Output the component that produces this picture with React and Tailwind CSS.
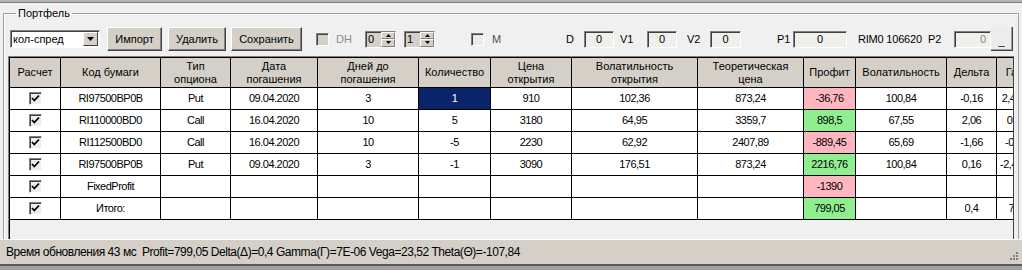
import React from 'react';

const colW = [
  'w-[51px]', 'w-[100px]', 'w-[70px]', 'w-[87px]', 'w-[101px]', 'w-[72px]', 'w-[81px]',
  'w-[126px]', 'w-[106px]', 'w-[52px]', 'w-[91px]', 'w-[50px]', 'w-[51px]',
];

const headers = [
  ['Расчет'], ['Код бумаги'], ['Тип', 'опциона'], ['Дата', 'погашения'], ['Дней до', 'погашения'],
  ['Количество'], ['Цена', 'открытия'], ['Волатильность', 'открытия'], ['Теоретическая', 'цена'],
  ['Профит'], ['Волатильность'], ['Дельта'], ['Гамма'],
];

const rows = [
  { v: ['RI97500BP0B', 'Put', '09.04.2020', '3', '1', '910', '102,36', '873,24', '-36,76', '100,84', '-0,16', '2,47E-05'], profit: 'red', sel: true },
  { v: ['RI110000BD0', 'Call', '16.04.2020', '10', '5', '3180', '64,95', '3359,7', '898,5', '67,55', '2,06', '0,0001'], profit: 'green' },
  { v: ['RI112500BD0', 'Call', '16.04.2020', '10', '-5', '2230', '62,92', '2407,89', '-889,45', '65,69', '-1,66', '-0,0001'], profit: 'red' },
  { v: ['RI97500BP0B', 'Put', '09.04.2020', '3', '-1', '3090', '176,51', '873,24', '2216,76', '100,84', '0,16', '-2,47E-05'], profit: 'green' },
  { v: ['FixedProfit', '', '', '', '', '', '', '', '-1390', '', '', ''], profit: 'red' },
  { v: ['Итого:', '', '', '', '', '', '', '', '799,05', '', '0,4', '7E-06'], profit: 'green' },
];

function CheckMark() {
  return (
    <svg width="9" height="9" viewBox="0 0 9 9">
      <path d="M1 4 L3.3 6.5 L8 1.5" fill="none" stroke="#000" strokeWidth="1.8" />
    </svg>
  );
}

function CheckBox({ checked, disabled }) {
  return (
    <div className={`w-[13px] h-[13px] shrink-0 border border-t-[#808080] border-l-[#808080] border-b-white border-r-white shadow-[inset_1px_1px_0_#404040] flex items-center justify-center ${disabled ? 'bg-[#d4d0c8]' : 'bg-[#ececec]'}`}>
      {checked && <CheckMark />}
    </div>
  );
}

function Btn({ className, children }) {
  return (
    <div className={`h-[24px] shrink-0 bg-[#d4d0c8] border border-t-white border-l-white border-b-[#404040] border-r-[#404040] shadow-[inset_-1px_-1px_0_#808080] flex items-center justify-center text-[11px] ${className}`}>
      {children}
    </div>
  );
}

function Edit({ className, children, gray }) {
  return (
    <div className={`h-[17px] shrink-0 bg-[#f0efec] border border-t-[#808080] border-l-[#808080] border-b-white border-r-white shadow-[inset_1px_1px_0_#404040] flex items-center text-[11px] ${gray ? 'text-[#8a8a8a] justify-end pr-[4px]' : 'justify-center'} ${className}`}>
      {children}
    </div>
  );
}

function Tri({ up }) {
  return (
    <svg width="5" height="3" viewBox="0 0 5 3">
      <path d={up ? 'M2.5 0 L5 3 L0 3 Z' : 'M0 0 L5 0 L2.5 3 Z'} fill="#000" />
    </svg>
  );
}

function Spin({ value, className }) {
  return (
    <div className={`h-[17px] w-[31px] shrink-0 bg-[#d4d0c8] border border-t-[#808080] border-l-[#808080] border-b-white border-r-white shadow-[inset_1px_1px_0_#404040] flex text-[11px] ${className}`}>
      <div className="flex-1 pl-[2px] flex items-center">{value}</div>
      <div className="w-[14px] flex flex-col">
        <div className="flex-1 bg-[#d4d0c8] border-t border-l border-t-white border-l-white border-b border-r border-b-[#808080] border-r-[#808080] flex items-center justify-center"><Tri up /></div>
        <div className="flex-1 bg-[#d4d0c8] border-t border-l border-t-white border-l-white border-b border-r border-b-[#808080] border-r-[#808080] flex items-center justify-center"><Tri /></div>
      </div>
    </div>
  );
}

function Toolbar() {
  return (
    <div className="flex items-center h-[24px] ml-[2px] mt-[7px]">
      <div className="w-[90px] h-[18px] shrink-0 bg-white border border-t-[#808080] border-l-[#808080] border-b-white border-r-white shadow-[inset_1px_1px_0_#404040] flex items-center">
        <div className="flex-1 pl-[2px] text-[11px]">кол-спред</div>
        <div className="w-[15px] h-[14px] mr-[1px] bg-[#d4d0c8] border border-t-white border-l-white border-b-[#404040] border-r-[#404040] flex items-center justify-center">
          <svg width="7" height="4" viewBox="0 0 7 4"><path d="M0 0 L7 0 L3.5 4 Z" fill="#000" /></svg>
        </div>
      </div>
      <Btn className="w-[55px] ml-[7px]">Импорт</Btn>
      <Btn className="w-[58px] ml-[6px]">Удалить</Btn>
      <Btn className="w-[71px] ml-[5px]">Сохранить</Btn>
      <div className="ml-[14px]"><CheckBox disabled /></div>
      <span className="w-[29px] ml-[7px] text-[11px] text-[#8c8c8c]">DH</span>
      <Spin value="0" />
      <Spin value="1" className="ml-[8px]" />
      <div className="ml-[36px]"><CheckBox /></div>
      <span className="w-[74px] ml-[8px] text-[11px] text-[#505050]">M</span>
      <span className="w-[18px] text-[11px]">D</span>
      <Edit className="w-[30px]">0</Edit>
      <span className="w-[27px] ml-[6px] text-[11px]">V1</span>
      <Edit className="w-[30px]">0</Edit>
      <span className="w-[23px] ml-[10px] text-[11px]">V2</span>
      <Edit className="w-[31px]">0</Edit>
      <span className="w-[16px] ml-[36px] text-[11px]">P1</span>
      <Edit className="w-[54px]">0</Edit>
      <span className="w-[70px] ml-[11px] text-[11px] tracking-[-0.2px]">RIM0 106620</span>
      <span className="w-[26px] text-[11px]">P2</span>
      <Edit className="w-[37px]" gray>0</Edit>
      <div className="w-[22px] h-[24px] shrink-0 bg-[#ececec] border-r border-b border-r-[#404040] border-b-[#404040] shadow-[inset_-1px_-1px_0_#a0a0a0] flex items-end justify-center pb-[3px] text-[11px] leading-none">_</div>
    </div>
  );
}

function Grid() {
  return (
    <div className="mt-[5px] w-[1006px] h-[190px] border border-[#808080] border-r-[#404040]">
      <div className="h-full border-t border-l border-black overflow-hidden bg-[#f0f0f0]">
        <div className="flex h-[30px] bg-[#d4d0c8]">
          {headers.map((h, i) => (
            <div key={i} className={`${colW[i]} shrink-0 h-full overflow-hidden border-r border-b border-black flex flex-col items-center justify-center leading-[13px] text-[11px] whitespace-nowrap`}>
              {h.map((l) => <div key={l}>{l}</div>)}
            </div>
          ))}
        </div>
        {rows.map((r, ri) => (
          <div key={ri} className="flex h-[22px]">
            <div className={`${colW[0]} shrink-0 h-full border-r border-b border-black bg-white flex items-center justify-center`}>
              <CheckBox checked />
            </div>
            {r.v.map((val, ci) => {
              const i = ci + 1;
              let bg = 'bg-white text-black';
              if (i === 9) bg = r.profit === 'red' ? 'bg-[#ffb6c1] text-black' : 'bg-[#90ee90] text-black';
              if (i === 5 && r.sel) bg = 'bg-[#0a246a] text-white';
              return (
                <div key={ci} className={`${colW[i]} ${bg} shrink-0 h-full overflow-hidden border-r border-b border-black flex items-center justify-center text-[11px] tracking-[-0.5px] whitespace-nowrap`}>
                  {val}
                </div>
              );
            })}
          </div>
        ))}
      </div>
    </div>
  );
}

export default function App() {
  return (
    <div className="w-[1022px] h-[270px] overflow-hidden flex flex-col bg-[#f0f0f0] text-black font-['Liberation_Sans',Arial,sans-serif]">
      <div className="h-[3px] shrink-0 bg-[#b4b4b4] border-b border-[#808080]" />
      <div className="h-[236px] shrink-0 overflow-hidden">
        <fieldset className="ml-[3px] mt-[4px] w-[1016px] h-[260px] border border-[#a0a0a0] shadow-[inset_1px_1px_0_#fff] pl-[4px]">
          <legend className="ml-[8px] px-[2px] text-[11px] leading-[13px]">Портфель</legend>
          <Toolbar />
          <Grid />
        </fieldset>
      </div>
      <div className="h-[25px] shrink-0 bg-[#d4d0c8] border-t border-white flex items-center justify-between pl-[6px] pr-[4px]">
        <span className="text-[12px] tracking-[-0.45px] whitespace-pre">Время обновления 43 мс  Profit=799,05 Delta(Δ)=0,4 Gamma(Γ)=7E-06 Vega=23,52 Theta(Θ)=-107,84</span>
        <svg width="11" height="11" viewBox="0 0 11 11" className="self-end mb-[2px]">
          {[[9, 1], [6, 4], [9, 4], [3, 7], [6, 7], [9, 7]].map(([x, y]) => (
            <rect key={`${x}-${y}`} x={x} y={y} width="2" height="2" fill="#808080" />
          ))}
        </svg>
      </div>
      <div className="h-[6px] shrink-0 bg-[#a0a0a0] border-t-2 border-[#5a5a5a]" />
    </div>
  );
}
